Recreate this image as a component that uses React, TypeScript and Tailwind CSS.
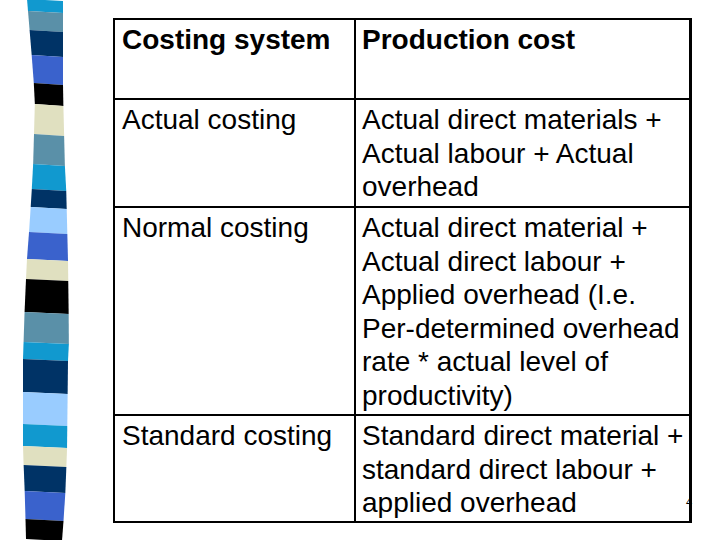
const leftEdge: [number, number][] = [
  [0, 27], [60, 32], [100, 35], [170, 33], [220, 30], [260, 27], [300, 25], [360, 23], [450, 23], [500, 25], [540, 26],
];
const rightEdge: [number, number][] = [
  [0, 63], [90, 63], [170, 65], [180, 66], [260, 68], [340, 69], [360, 68], [450, 67], [500, 65], [540, 62],
];

const blocks: [number, number, string][] = [
  [0, 12, '#1199cf'],
  [12, 31, '#5a90a8'],
  [31, 56, '#003366'],
  [56, 84, '#3a62cc'],
  [84, 105, '#000000'],
  [105, 135, '#e0e0c0'],
  [135, 165, '#5a90a8'],
  [165, 190, '#1199cf'],
  [190, 208, '#003366'],
  [208, 233, '#99ccff'],
  [233, 260, '#3a62cc'],
  [260, 280, '#e0e0c0'],
  [280, 313, '#000000'],
  [313, 343, '#5a90a8'],
  [343, 360, '#1199cf'],
  [360, 393, '#003366'],
  [393, 425, '#99ccff'],
  [425, 447, '#1199cf'],
  [447, 466, '#e0e0c0'],
  [466, 492, '#003366'],
  [492, 520, '#3a62cc'],
  [520, 540, '#000000'],
];

function edgeAt(pts: [number, number][], y: number) {
  for (let i = 0; i < pts.length - 1; i++) {
    const [y0, x0] = pts[i];
    const [y1, x1] = pts[i + 1];
    if (y >= y0 && y <= y1) return x0 + ((x1 - x0) * (y - y0)) / (y1 - y0);
  }
  return pts[pts.length - 1][1];
}

function Strip() {
  return (
    <svg width="113" height="540" viewBox="0 0 113 540" className="shrink-0">
      {blocks.map(([top, bottom, color], i) => {
        const tl = edgeAt(leftEdge, top);
        const tr = edgeAt(rightEdge, top);
        const bl = edgeAt(leftEdge, bottom);
        const br = edgeAt(rightEdge, bottom);
        return (
          <polygon
            key={i}
            points={`${tl},${top - 1} ${tr},${top + 1} ${br},${bottom + 1} ${bl},${bottom - 1}`}
            fill={color}
          />
        );
      })}
    </svg>
  );
}

const rows = [
  {
    h: 'h-[108px]',
    left: 'Actual costing',
    right: ['Actual direct materials +', 'Actual labour + Actual', 'overhead'],
  },
  {
    h: 'h-[208px]',
    left: 'Normal costing',
    right: [
      'Actual direct material +',
      'Actual direct labour +',
      'Applied overhead (I.e.',
      'Per-determined overhead',
      'rate * actual level of',
      'productivity)',
    ],
  },
  {
    h: 'h-[105px]',
    left: 'Standard costing',
    right: ['Standard direct material +', 'standard direct labour +', 'applied overhead'],
  },
];

export default function App() {
  return (
    <div className="relative flex w-[720px] h-[540px] bg-white overflow-hidden font-['Liberation_Sans',Arial,sans-serif] text-black">
      <Strip />
      <div className="mt-[18px] w-[579px] h-[505px] border-2 border-r-[3px] border-black flex flex-col text-[28px] leading-[33.6px]">
        <div className="flex h-[80px] border-b-2 border-black font-bold">
          <div className="w-[241px] border-r-2 border-black pl-[7px] pt-[3px] whitespace-nowrap">Costing system</div>
          <div className="flex-1 pl-[6px] pt-[3px] whitespace-nowrap">Production cost</div>
        </div>
        {rows.map((r, i) => (
          <div
            key={r.left}
            className={`flex ${r.h} ${i < rows.length - 1 ? 'border-b-2 border-black' : ''}`}
          >
            <div className="w-[241px] border-r-2 border-black pl-[7px] pt-[3px] whitespace-nowrap">{r.left}</div>
            <div className="flex-1 pl-[6px] pt-[3px] whitespace-nowrap">
              {r.right.map((line) => (
                <div key={line}>{line}</div>
              ))}
            </div>
          </div>
        ))}
      </div>
      <span className="absolute left-[686px] top-[497px] text-[11px] leading-none text-black">4</span>
    </div>
  );
}
